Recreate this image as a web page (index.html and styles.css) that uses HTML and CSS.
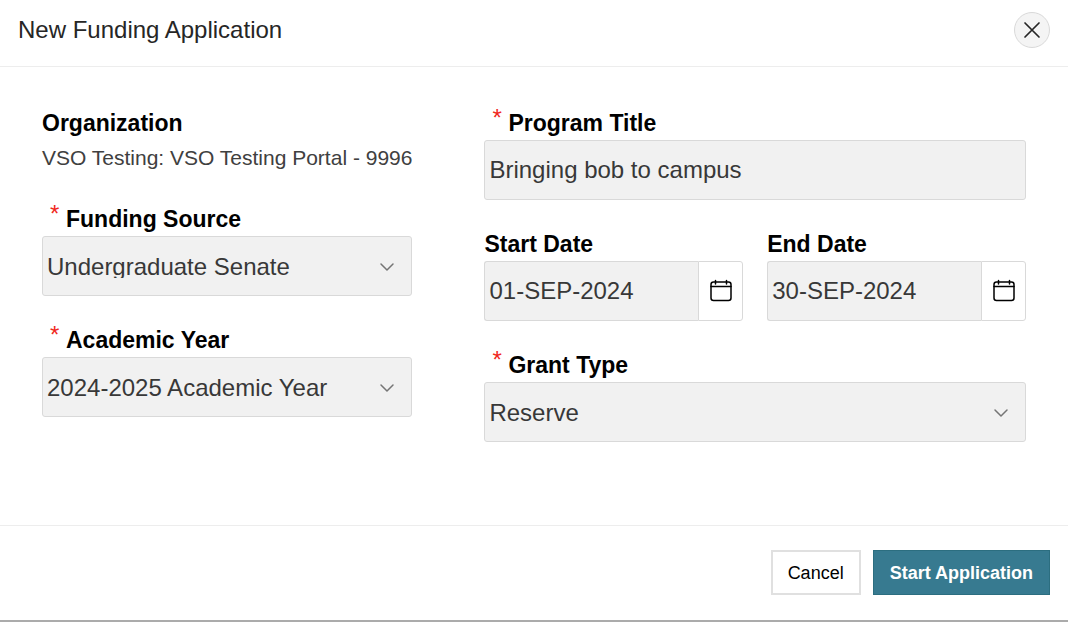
FILE: index.html
```html
<!DOCTYPE html>
<html lang="en">
<head>
    <meta charset="UTF-8">
    <meta name="viewport" content="width=device-width, initial-scale=1.0">
    <title>New Funding Application</title>
    <link rel="stylesheet" href="styles.css">
</head>
<body>
<header class="dialog-header">
    <h1>New Funding Application</h1>
    <button type="button" class="close" aria-label="Close">
        <svg width="18" height="18" viewBox="0 0 18 18"><path d="M2 2l14 14M16 2L2 16"/></svg>
    </button>
</header>
<form class="dialog-form">
    <main class="columns">
        <div class="column">
            <div class="field">
                <div class="label">Organization</div>
                <div class="value">VSO Testing: VSO Testing Portal - 9996</div>
            </div>
            <div class="field">
                <label class="label" for="source"><span class="required">*</span>Funding Source</label>
                <div class="select">
                    <select id="source">
                        <option>Undergraduate Senate</option>
                    </select>
                    <svg class="arrow" width="16" height="10" viewBox="0 0 16 10"><path d="M2 2l6 6 6-6"/></svg>
                </div>
            </div>
            <div class="field">
                <label class="label" for="year"><span class="required">*</span>Academic Year</label>
                <div class="select">
                    <select id="year">
                        <option>2024-2025 Academic Year</option>
                    </select>
                    <svg class="arrow" width="16" height="10" viewBox="0 0 16 10"><path d="M2 2l6 6 6-6"/></svg>
                </div>
            </div>
        </div>
        <div class="column">
            <div class="field">
                <label class="label" for="program"><span class="required">*</span>Program Title</label>
                <input class="text" type="text" id="program" value="Bringing bob to campus">
            </div>
            <div class="dates">
                <div class="field">
                    <label class="label" for="start">Start Date</label>
                    <div class="date">
                        <input class="text" type="text" id="start" value="01-SEP-2024">
                        <button type="button" class="calendar" aria-label="Pick start date">
                            <svg width="24" height="24" viewBox="0 0 24 24"><rect x="2" y="3" width="20" height="18.5" rx="2.5"/><path d="M2 7.5h20M6.5 1.5v3.5M17.500 1.500v3.500"/></svg>
                        </button>
                    </div>
                </div>
                <div class="field">
                    <label class="label" for="end">End Date</label>
                    <div class="date">
                        <input class="text" type="text" id="end" value="30-SEP-2024">
                        <button type="button" class="calendar" aria-label="Pick end date">
                            <svg width="24" height="24" viewBox="0 0 24 24"><rect x="2" y="3" width="20" height="18.5" rx="2.5"/><path d="M2 7.5h20M6.5 1.5v3.5M17.500 1.500v3.500"/></svg>
                        </button>
                    </div>
                </div>
            </div>
            <div class="field">
                <label class="label" for="grant"><span class="required">*</span>Grant Type</label>
                <div class="select">
                    <select id="grant">
                        <option>Reserve</option>
                    </select>
                    <svg class="arrow" width="16" height="10" viewBox="0 0 16 10"><path d="M2 2l6 6 6-6"/></svg>
                </div>
            </div>
        </div>
    </main>
    <footer class="dialog-footer">
        <button type="button" class="button">Cancel</button>
        <button type="submit" class="button primary">Start Application</button>
    </footer>
</form>
</body>
</html>
```
FILE: styles.css
```css
* {
    box-sizing: border-box;
}

body {
    display: flex;
    flex-direction: column;
    min-height: 100vh;
    margin: 0;
    font-family: 'Helvetica Neue', 'Liberation Sans', Arial, sans-serif;
    color: #262626;
    background-color: #fff;
    border-bottom: 2px solid #ababab;
}

button, input, select {
    font-family: inherit;
}

svg {
    fill: none;
    stroke: currentColor;
    stroke-linecap: round;
    stroke-linejoin: round;
}

.dialog-header {
    display: flex;
    align-items: center;
    justify-content: space-between;
    padding: 12px 18px 18px;
    border-bottom: 1px solid #ededed;
}

.dialog-header h1 {
    margin: 0;
    font-size: 24px;
    font-weight: normal;
    line-height: 36px;
}

.close {
    display: flex;
    align-items: center;
    justify-content: center;
    width: 36px;
    height: 36px;
    padding: 0;
    color: #262626;
    background-color: #f4f4f4;
    border: 1px solid #d9d9d9;
    border-radius: 50%;
}

.close svg {
    stroke-width: 1.7;
}

.dialog-form {
    display: flex;
    flex: 1;
    flex-direction: column;
}

.columns {
    display: grid;
    flex: 1;
    grid-template-columns: 15fr 22fr;
    gap: 72px;
    padding: 39px 42px;
}

.column {
    display: flex;
    flex-direction: column;
    gap: 27px;
}

.dates {
    display: grid;
    grid-template-columns: 1fr 1fr;
    gap: 24px;
}

.label {
    display: flex;
    font-size: 23px;
    font-weight: bold;
    line-height: 34px;
    color: #000;
}

.required {
    width: 24px;
    padding-left: 8px;
    font-size: 24px;
    font-weight: normal;
    line-height: 24px;
    color: #f0281e;
}

.value {
    font-size: 21px;
    line-height: 35px;
    white-space: nowrap;
    color: #404040;
}

.text, .select select {
    width: 100%;
    height: 60px;
    margin: 0;
    padding: 0 4px;
    font-size: 24px;
    color: #383838;
    background-color: #f1f1f1;
    border: 1px solid #d9d9d9;
    border-radius: 3px;
}

.select {
    position: relative;
}

.select select {
    display: block;
    padding: 16px 42px 17px 4px;
    appearance: none;
}

.arrow {
    position: absolute;
    top: 26px;
    right: 17px;
    color: #757575;
    pointer-events: none;
    stroke-width: 1.5;
}

.date {
    display: flex;
}

.date .text {
    flex: 1;
    min-width: 0;
    border-right: 0;
    border-radius: 3px 0 0 3px;
}

.calendar {
    display: flex;
    align-items: center;
    justify-content: center;
    width: 45px;
    padding: 0;
    color: #000;
    background-color: #fff;
    border: 1px solid #d9d9d9;
    border-radius: 0 3px 3px 0;
}

.calendar svg {
    stroke-width: 1.5;
}

.dialog-footer {
    display: flex;
    justify-content: flex-end;
    gap: 12px;
    padding: 24px 18px 25px;
    border-top: 1px solid #ededed;
}

.button {
    height: 45px;
    padding: 2px 15px 0;
    font-size: 18px;
    color: #000;
    background-color: #fff;
    border: 2px solid #e0e0e0;
}

.primary {
    padding: 2px 16px 0;
    font-weight: bold;
    color: #fff;
    background-color: #377a90;
    border: 1px solid #2c6e80;
}
```
